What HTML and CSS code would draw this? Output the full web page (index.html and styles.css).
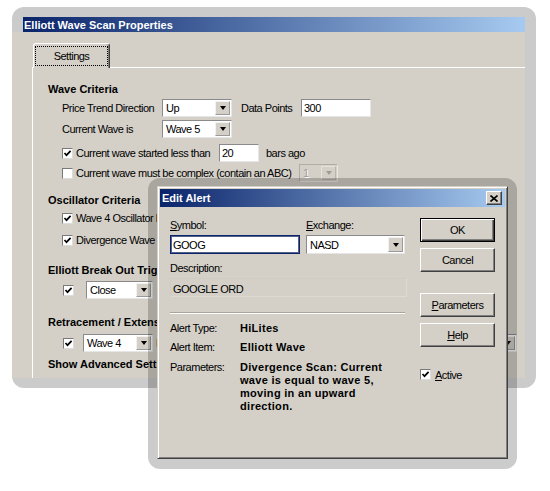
FILE: index.html
```html
<!DOCTYPE html>
<html>
<head>
<meta charset="utf-8">
<title>Elliott Wave Scan Properties</title>
<link rel="stylesheet" href="styles.css">
</head>
<body>
<div class="back-frame">
  <div class="win-title back-title">Elliott Wave Scan Properties</div>
  <div class="back-body">
    <div class="tabstrip"><div class="tab"><span class="tab-focus">Settings</span></div></div>
    <div class="panel">
      <div class="row head r-a">Wave Criteria</div>
      <div class="row ctl ind r-b">
        <span class="w100">Price Trend Direction</span>
        <div class="dd w70"><span class="dd-val">Up</span><span class="dd-btn"><i class="tri"></i></span></div>
        <span class="w60 ml9">Data Points</span>
        <div class="txt w70">300</div>
      </div>
      <div class="row ctl ind r-c">
        <span class="w100">Current Wave is</span>
        <div class="dd w70"><span class="dd-val">Wave 5</span><span class="dd-btn"><i class="tri"></i></span></div>
      </div>
      <div class="row ctl ind r-d">
        <span class="cb"><svg viewBox="0 0 9 9" width="9" height="9"><path d="M1.5 4 L3.5 6.2 L7.6 1.8" fill="none" stroke="#000" stroke-width="1.7"/></svg></span>
        <span class="cbl w143">Current wave started less than</span>
        <div class="txt w40">20</div>
        <span class="ml7">bars ago</span>
      </div>
      <div class="row ctl ind r-e">
        <span class="cb"></span>
        <span class="cbl w223">Current wave must be complex (contain an ABC)</span>
        <div class="dd w39 disabled"><span class="dd-val">1</span><span class="dd-btn"><i class="tri"></i></span></div>
      </div>
      <div class="row head r-f">Oscillator Criteria</div>
      <div class="row line ind r-g">
        <span class="cb"><svg viewBox="0 0 9 9" width="9" height="9"><path d="M1.5 4 L3.5 6.2 L7.6 1.8" fill="none" stroke="#000" stroke-width="1.7"/></svg></span>
        <span class="cbl clip84">Wave 4 Oscillator has pulled back to zero</span>
      </div>
      <div class="row line ind r-h">
        <span class="cb"><svg viewBox="0 0 9 9" width="9" height="9"><path d="M1.5 4 L3.5 6.2 L7.6 1.8" fill="none" stroke="#000" stroke-width="1.7"/></svg></span>
        <span class="cbl clip84">Divergence Wave 3 to Wave 5</span>
      </div>
      <div class="row head r-i"><span class="clip112">Elliott Break Out Trigger</span></div>
      <div class="row ctl ind2 r-j">
        <span class="cb"><svg viewBox="0 0 9 9" width="9" height="9"><path d="M1.5 4 L3.5 6.2 L7.6 1.8" fill="none" stroke="#000" stroke-width="1.7"/></svg></span>
        <div class="dd w67 ml12"><span class="dd-val">Close</span><span class="dd-btn"><i class="tri"></i></span></div>
      </div>
      <div class="row head r-k"><span class="clip112">Retracement / Extension</span></div>
      <div class="row ctl ind2 r-l">
        <span class="cb"><svg viewBox="0 0 9 9" width="9" height="9"><path d="M1.5 4 L3.5 6.2 L7.6 1.8" fill="none" stroke="#000" stroke-width="1.7"/></svg></span>
        <div class="dd w70 ml9"><span class="dd-val">Wave 4</span><span class="dd-btn"><i class="tri"></i></span></div>
        <span class="ml3 clip6">High</span>
        <div class="dd w60 push"><span class="dd-val"></span><span class="dd-btn"><i class="tri"></i></span></div>
      </div>
      <div class="row head r-m"><span class="clip112">Show Advanced Settings</span></div>
    </div>
  </div>
</div>

<div class="alert-frame">
  <div class="alert-win">
    <div class="win-title alert-title">
      <span>Edit Alert</span>
      <span class="xbtn"><svg viewBox="0 0 8 7" width="8" height="7"><path d="M0.5 0.5 L7.5 6.5 M7.5 0.5 L0.5 6.5" stroke="#000" stroke-width="1.6" fill="none"/></svg></span>
    </div>
    <div class="alert-body">
      <div class="acol">
        <div class="lbl-row">
          <span class="w136"><u>S</u>ymbol:</span>
          <span><u>E</u>xchange:</span>
        </div>
        <div class="in-row">
          <div class="sym-in">GOOG</div>
          <div class="dd ex-dd"><span class="dd-val">NASD</span><span class="dd-btn"><i class="tri"></i></span></div>
        </div>
        <div class="desc-lbl">Description:</div>
        <div class="desc-box">GOOGLE ORD</div>
        <div class="sep"></div>
        <div class="info r-type"><span>Alert Type:</span><span class="val">HiLites</span></div>
        <div class="info r-item"><span>Alert Item:</span><span class="val">Elliott Wave</span></div>
        <div class="info r-par"><span>Parameters:</span><span class="val">Divergence Scan: Current wave is equal to wave 5, moving in an upward direction.</span></div>
      </div>
      <div class="bcol">
        <div class="btn default">OK</div>
        <div class="btn g6">Cancel</div>
        <div class="btn g21"><span><u>P</u>arameters</span></div>
        <div class="btn g6"><span><u>H</u>elp</span></div>
        <div class="active-row">
          <span class="cb"><svg viewBox="0 0 9 9" width="9" height="9"><path d="M1.5 4 L3.5 6.2 L7.6 1.8" fill="none" stroke="#000" stroke-width="1.7"/></svg></span>
          <span class="cbl"><u>A</u>ctive</span>
        </div>
      </div>
    </div>
  </div>
</div>
</body>
</html>
```

FILE: styles.css
```css
* { box-sizing: border-box; }
html { margin: 0; }
body {
  margin: 0;
  padding: 7px 0 0 12px;
  width: 550px;
  height: 491px;
  overflow: hidden;
  position: relative;
  background: #fff;
  font-family: "Liberation Sans", Arial, sans-serif;
  font-size: 11px;
  letter-spacing: -0.5px;
  color: #000;
}
u { text-decoration: underline; text-underline-offset: 1px; }

.back-frame {
  width: 524px;
  height: 381px;
  background: #cbcbcb;
  border-radius: 12px;
  overflow: hidden;
  padding: 10px 11px 10px 0;
  display: flex;
  flex-direction: column;
}
.win-title {
  display: flex;
  align-items: center;
  color: #fff;
  font-weight: bold;
  letter-spacing: 0;
  background: linear-gradient(to right, #0a246a, #a6caf0);
  flex: none;
}
.back-title { height: 15px; margin-left: 11px; padding-left: 1px; }
.back-body {
  flex: 1;
  min-height: 0;
  background: #d4d0c8;
  display: flex;
  flex-direction: column;
}
.tabstrip {
  height: 35px;
  flex: none;
  display: flex;
  align-items: flex-end;
  padding-left: 21px;
}
.tab {
  width: 77px;
  height: 25px;
  margin-bottom: -1px;
  position: relative;
  z-index: 1;
  background: #d4d0c8;
  border-top: 1px solid #fff;
  border-left: 1px solid #fff;
  border-right: 1px solid #404040;
  box-shadow: inset -1px 0 #808080;
  border-radius: 3px 3px 0 0;
  padding: 2px 1px 2px 1px;
  display: flex;
}
.tab-focus {
  flex: 1;
  border: 1px dotted #000;
  display: flex;
  align-items: center;
  justify-content: center;
}
.panel {
  flex: 1;
  margin-left: 20px;
  border-left: 1px solid #fff;
  border-top: 1px solid #fff;
  padding-left: 15px;
  display: flex;
  flex-direction: column;
}
.row { display: flex; align-items: center; flex: none; white-space: nowrap; }
.head { height: 14px; font-weight: bold; letter-spacing: 0; }
.ctl { height: 18px; }
.line { height: 14px; }
.ind { padding-left: 14px; }
.ind2 { padding-left: 15px; }

.r-a { margin-top: 14px; }
.r-b { margin-top: 3px; }
.r-c { margin-top: 3px; }
.r-d { margin-top: 6px; }
.r-e { margin-top: 2px; }
.r-f { margin-top: 11px; }
.r-g { margin-top: 4px; }
.r-h { margin-top: 8px; }
.r-i { margin-top: 16px; }
.r-j { margin-top: 4px; }
.r-k { margin-top: 16px; }
.r-l { margin-top: 5px; }
.r-m { margin-top: 5px; }

/* texts that run on behind the Edit Alert dialog are cut where it hides them */
.clip84 { width: 84px; overflow: hidden; flex: none; }
.clip112 { width: 112px; overflow: hidden; display: block; }
.clip6 { width: 6px; overflow: hidden; flex: none; }

.w100 { width: 100px; flex: none; }
.w60 { width: 60px; flex: none; }
.w70 { width: 70px; flex: none; }
.w67 { width: 67px; flex: none; }
.w40 { width: 40px; flex: none; }
.w39 { width: 39px; flex: none; }
.w143 { width: 143px; flex: none; }
.w223 { width: 223px; flex: none; }
.w136 { width: 136px; flex: none; }
.ml3 { margin-left: 3px; }
.ml7 { margin-left: 7px; }
.ml9 { margin-left: 9px; }
.ml12 { margin-left: 12px; }
.push { margin-left: auto; margin-right: 8px; }

.dd {
  display: flex;
  height: 18px;
  background: #fff;
  border: 1px solid;
  border-color: #8a8a8a #e6e6e6 #e6e6e6 #8a8a8a;
  padding: 1px;
}
.dd-val { flex: 1; padding-left: 2px; display: flex; align-items: center; overflow: hidden; }
.dd-btn {
  width: 15px;
  flex: none;
  background: #d4d0c8;
  border: 1px solid;
  border-color: #f2f2f2 #9a9a9a #9a9a9a #f2f2f2;
  display: flex;
  align-items: center;
  justify-content: center;
}
.tri {
  width: 0;
  height: 0;
  border-left: 3.5px solid transparent;
  border-right: 3.5px solid transparent;
  border-top: 4px solid #000;
}
.dd.disabled { background: #d4d0c8; border-color: #b0aca6 #ebe8e2 #ebe8e2 #b0aca6; }
.dd.disabled .dd-val { color: #a09c96; text-shadow: 1px 1px #fff; }
.dd.disabled .tri { border-top-color: #a09c96; }
.dd.disabled .dd-btn { border-color: #e6e3dd #b8b4ae #b8b4ae #e6e3dd; }

.txt {
  height: 18px;
  background: #fff;
  border: 1px solid;
  border-color: #8a8a8a #e6e6e6 #e6e6e6 #8a8a8a;
  padding-left: 2px;
  display: flex;
  align-items: center;
}
.cb {
  width: 11px;
  height: 11px;
  flex: none;
  background: #fff;
  border: 1px solid;
  border-color: #7a7a7a #dcdcdc #dcdcdc #7a7a7a;
  display: flex;
  align-items: center;
  justify-content: center;
}
.cbl { margin-left: 3px; }

/* Edit Alert dialog (overlay) */
.alert-frame {
  position: absolute;
  left: 148px;
  top: 178px;
  width: 369px;
  height: 291px;
  border-radius: 12px;
  background: rgba(0, 0, 0, 0.2);
  padding: 8px 9px 10px 9px;
}
.alert-win {
  height: 100%;
  background: #d4d0c8;
  border: 1px solid;
  border-color: #d4d0c8 #404040 #404040 #d4d0c8;
  box-shadow: inset 1px 1px #fff, inset -1px -1px #808080;
  padding: 2px;
  display: flex;
  flex-direction: column;
}
.alert-title { height: 18px; padding-left: 2px; }
.xbtn {
  margin-left: auto;
  margin-right: 3px;
  width: 16px;
  height: 14px;
  background: #d4d0c8;
  border: 1px solid;
  border-color: #fff #404040 #404040 #fff;
  box-shadow: inset -1px -1px #808080;
  display: flex;
  align-items: center;
  justify-content: center;
}
.alert-body { display: flex; gap: 15px; padding: 11px 0 0 10px; }
.acol { width: 235px; flex: none; display: flex; flex-direction: column; }
.lbl-row { display: flex; align-items: center; height: 14px; }
.in-row { display: flex; margin-top: 3px; height: 19px; }
.sym-in {
  width: 130px;
  height: 19px;
  background: #fff;
  border: 1px solid #0a246a;
  box-shadow: inset 0 0 0 1px #56608a;
  padding-left: 2px;
  display: flex;
  align-items: center;
}
.ex-dd { width: 99px; height: 19px; margin-left: 6px; }
.desc-lbl { margin-top: 7px; height: 14px; display: flex; align-items: center; }
.desc-box {
  margin-top: 3px;
  width: 237px;
  height: 19px;
  border: 1px solid;
  border-color: #d0ccc4 #dedad3 #dedad3 #d0ccc4;
  padding: 2px 0 0 2px;
  display: flex;
  align-items: center;
}
.sep {
  margin-top: 15px;
  height: 0;
  border-top: 1px solid #a8a49c;
  border-bottom: 1px solid #fff;
}
.info { display: grid; grid-template-columns: 70px 165px; line-height: 13px; }
.info .val { font-weight: bold; letter-spacing: 0.3px; }
.r-type { margin-top: 8px; }
.r-item { margin-top: 6px; }
.r-par { margin-top: 7px; }

.bcol { width: 75px; flex: none; display: flex; flex-direction: column; }
.btn {
  height: 24px;
  background: #d4d0c8;
  border: 1px solid;
  border-color: #fff #404040 #404040 #fff;
  box-shadow: inset -1px -1px #808080;
  display: flex;
  align-items: center;
  justify-content: center;
}
.btn.default {
  border: 1px solid #000;
  box-shadow: inset 1px 1px #fff, inset -1px -1px #404040, inset -2px -2px #808080;
}
.g6 { margin-top: 6px; }
.g21 { margin-top: 21px; }
.active-row { margin-top: 22px; display: flex; align-items: center; height: 11px; }
.active-row .cbl { margin-left: 4px; }
```
